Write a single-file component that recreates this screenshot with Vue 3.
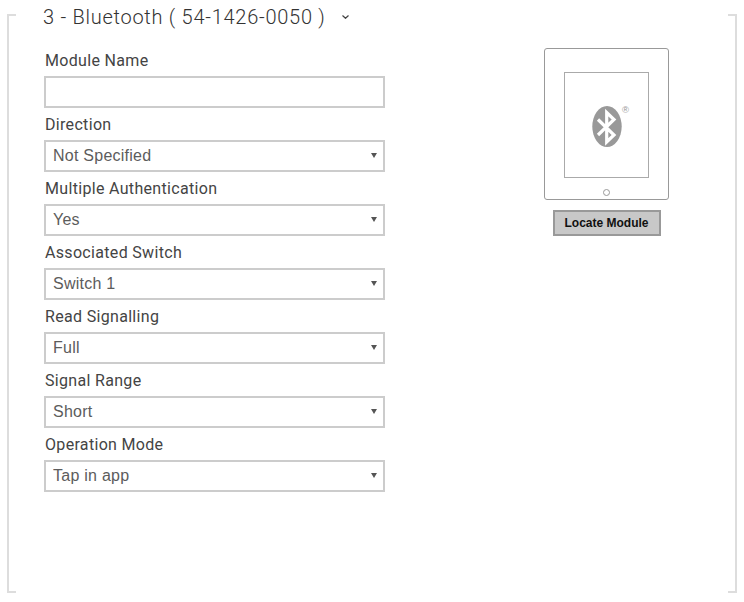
<template>
  <div class="frame">
    <div class="title">
      <span>3 - Bluetooth ( 54-1426-0050 )</span>
      <svg class="chevron" width="7" height="4" viewBox="0 0 7 4">
        <path d="M.5 .5 L3.5 3.3 L6.5 .5" fill="none" stroke="#444" stroke-width="1.2" />
      </svg>
    </div>

    <div class="columns">
      <form class="fields" @submit.prevent>
        <div class="field">
          <label for="module-name">Module Name</label>
          <input id="module-name" v-model="moduleName" type="text" />
        </div>
        <div v-for="item in selects" :key="item.label" class="field">
          <label>{{ item.label }}</label>
          <div class="select-wrap">
            <select v-model="item.value">
              <option>{{ item.value }}</option>
            </select>
          </div>
        </div>
      </form>

      <div class="side">
        <div class="device">
          <div class="screen">
            <svg class="logo" width="38" height="44" viewBox="0 0 38 44">
              <ellipse cx="15" cy="23.5" rx="14.7" ry="20.5" fill="#999" />
              <path d="M6 16.5 L22 32 L14.7 39 V9.5 L22 16.5 L6 32" fill="none" stroke="#fff" stroke-width="3.2" />
              <text x="30" y="10" class="reg">®</text>
            </svg>
          </div>
          <div class="home"></div>
        </div>
        <button class="locate" type="button">Locate Module</button>
      </div>
    </div>
  </div>
</template>

<script setup>
import { ref, reactive } from 'vue'

const moduleName = ref('')

const selects = reactive([
  { label: 'Direction', value: 'Not Specified' },
  { label: 'Multiple Authentication', value: 'Yes' },
  { label: 'Associated Switch', value: 'Switch 1' },
  { label: 'Read Signalling', value: 'Full' },
  { label: 'Signal Range', value: 'Short' },
  { label: 'Operation Mode', value: 'Tap in app' }
])
</script>

<style>
html,
body {
  background: #fff;
}
</style>

<style scoped>
.frame {
  position: relative;
  display: flex;
  flex-direction: column;
  box-sizing: border-box;
  width: 730px;
  height: 579px;
  margin: 14px 0 0 7px;
  padding: 0 35px;
  border-left: 2px solid #ddd;
  border-right: 2px solid #ddd;
}

/* little corner ticks of the bracket */
.frame::before,
.frame::after {
  content: '';
  position: absolute;
  left: 0;
  right: 0;
  height: 2px;
  background:
    linear-gradient(#ddd, #ddd) left / 7px 2px no-repeat,
    linear-gradient(#ddd, #ddd) right / 7px 2px no-repeat;
}

.frame::before {
  top: 0;
}

.frame::after {
  bottom: 0;
}

.title {
  display: flex;
  align-items: center;
  gap: 16px;
  height: 34px;
  margin: -14px 0 0 -1px;
  font-family: Roboto, sans-serif;
  font-weight: 300;
  font-size: 20px;
  letter-spacing: 0.73px;
  color: #333;
}

.columns {
  display: flex;
  margin-top: 10px;
}

.fields {
  width: 341px;
}

.field label {
  display: block;
  height: 32px;
  padding-left: 1px;
  line-height: 34px;
  font-family: Roboto, sans-serif;
  font-size: 16px;
  letter-spacing: 0.32px;
  color: #444;
}

.field input,
.field select {
  display: block;
  box-sizing: border-box;
  width: 100%;
  height: 32px;
  margin: 0;
  padding: 0 7px 2px;
  border: 2px solid #ccc;
  border-radius: 0;
  background: #fff;
  font-family: 'Liberation Sans', Arial, sans-serif;
  font-size: 16px;
  letter-spacing: 0.25px;
  color: #5c5c5c;
  outline: none;
  appearance: none;
}

.select-wrap {
  position: relative;
}

.select-wrap::after {
  content: '';
  position: absolute;
  top: 13px;
  right: 8px;
  border-left: 3px solid transparent;
  border-right: 3px solid transparent;
  border-top: 5px solid #555;
}

.side {
  display: flex;
  flex-direction: column;
  align-items: center;
  width: 125px;
  margin: 4px 0 0 159px;
}

.device {
  display: flex;
  flex-direction: column;
  align-items: center;
  box-sizing: border-box;
  width: 125px;
  height: 152px;
  padding-top: 23px;
  border: 1px solid #999;
  border-radius: 3px;
}

.screen {
  display: flex;
  align-items: center;
  justify-content: center;
  box-sizing: border-box;
  width: 85px;
  height: 106px;
  padding-left: 8px;
  border: 1px solid #aaa;
}

.logo {
  display: block;
}

.reg {
  font-family: 'Liberation Sans', Arial, sans-serif;
  font-size: 9.5px;
  fill: #999;
}

.home {
  box-sizing: border-box;
  width: 7px;
  height: 7px;
  margin-top: 11px;
  border: 1px solid #999;
  border-radius: 50%;
}

.locate {
  box-sizing: border-box;
  width: 108px;
  height: 26px;
  margin-top: 10px;
  padding: 0;
  border: 2px solid #999;
  border-radius: 0;
  background: #c8c8c8;
  font-family: 'Liberation Sans', Arial, sans-serif;
  font-weight: 700;
  font-size: 12px;
  color: #111;
}
</style>
